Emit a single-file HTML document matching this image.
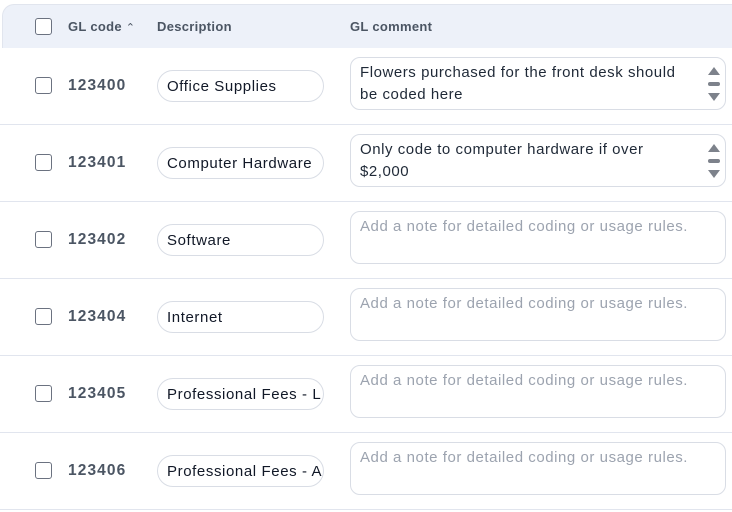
<!DOCTYPE html>
<html><head><style>
*{box-sizing:border-box;margin:0;padding:0}
body{width:732px;height:512px;overflow:hidden;background:#fff;font-family:"Liberation Sans",Arial,sans-serif;position:relative}
.hdr{position:absolute;left:2px;top:4px;width:740px;height:44px;background:#edf1f9;border:1px solid #e1e5ee;border-bottom:none;border-top-left-radius:12px}
.hl{position:absolute;top:19px;font-size:13px;font-weight:bold;color:#4b5563;letter-spacing:0.3px}
.cb{position:absolute;left:35px;width:17px;height:17px;border:1.5px solid #6b7280;border-radius:3px;background:#fff}
.row{position:absolute;left:0;width:732px;height:77px;border-bottom:1px solid #e1e5ee}
.code{position:absolute;left:68px;font-size:15.5px;font-weight:bold;color:#4b5563;letter-spacing:1.1px}
.pill{position:absolute;left:157px;width:167px;height:32px;border:1px solid #d9dde5;border-radius:16px;padding:0 9px;font-size:15px;line-height:31px;color:#111827;white-space:nowrap;overflow:hidden;letter-spacing:0.6px}
.ta{position:absolute;left:350px;width:376px;height:53px;border:1px solid #d9dde5;border-radius:10px;padding:4px 38px 5px 9px;font-size:15px;line-height:22px;color:#1f2937;letter-spacing:0.55px}
.ta.ph{color:#9ca3af;padding-right:9px}
.sb{position:absolute;right:4px;top:6px;width:14px;height:40px}
</style></head><body>
<div class="hdr"></div>
<div class="cb" style="top:18px"></div>
<div class="hl" style="left:68px">GL code <span style="font-weight:normal;font-size:11px">&#8963;</span></div>
<div class="hl" style="left:157px">Description</div>
<div class="hl" style="left:350px">GL comment</div>

<div class="row" style="top:48px"><div class="cb" style="top:29px"></div><div class="code" style="top:29px">123400</div><div class="pill" style="top:22px">Office Supplies</div><div class="ta" style="top:9px">Flowers purchased for the front desk should be coded here<svg class="sb" viewBox="0 0 14 40"><path d="M1 11L7 3L13 11Z" fill="#7d828b"/><rect x="1" y="18" width="12" height="4" rx="2" fill="#7d828b"/><path d="M1 29L7 37L13 29Z" fill="#7d828b"/></svg></div></div>
<div class="row" style="top:125px"><div class="cb" style="top:29px"></div><div class="code" style="top:29px">123401</div><div class="pill" style="top:22px">Computer Hardware</div><div class="ta" style="top:9px">Only code to computer hardware if over $2,000<svg class="sb" viewBox="0 0 14 40"><path d="M1 11L7 3L13 11Z" fill="#7d828b"/><rect x="1" y="18" width="12" height="4" rx="2" fill="#7d828b"/><path d="M1 29L7 37L13 29Z" fill="#7d828b"/></svg></div></div>
<div class="row" style="top:202px"><div class="cb" style="top:29px"></div><div class="code" style="top:29px">123402</div><div class="pill" style="top:22px">Software</div><div class="ta ph" style="top:9px">Add a note for detailed coding or usage rules.</div></div>
<div class="row" style="top:279px"><div class="cb" style="top:29px"></div><div class="code" style="top:29px">123404</div><div class="pill" style="top:22px">Internet</div><div class="ta ph" style="top:9px">Add a note for detailed coding or usage rules.</div></div>
<div class="row" style="top:356px"><div class="cb" style="top:29px"></div><div class="code" style="top:29px">123405</div><div class="pill" style="top:22px">Professional Fees - L</div><div class="ta ph" style="top:9px">Add a note for detailed coding or usage rules.</div></div>
<div class="row" style="top:433px"><div class="cb" style="top:29px"></div><div class="code" style="top:29px">123406</div><div class="pill" style="top:22px">Professional Fees - A</div><div class="ta ph" style="top:9px">Add a note for detailed coding or usage rules.</div></div>
</body></html>
